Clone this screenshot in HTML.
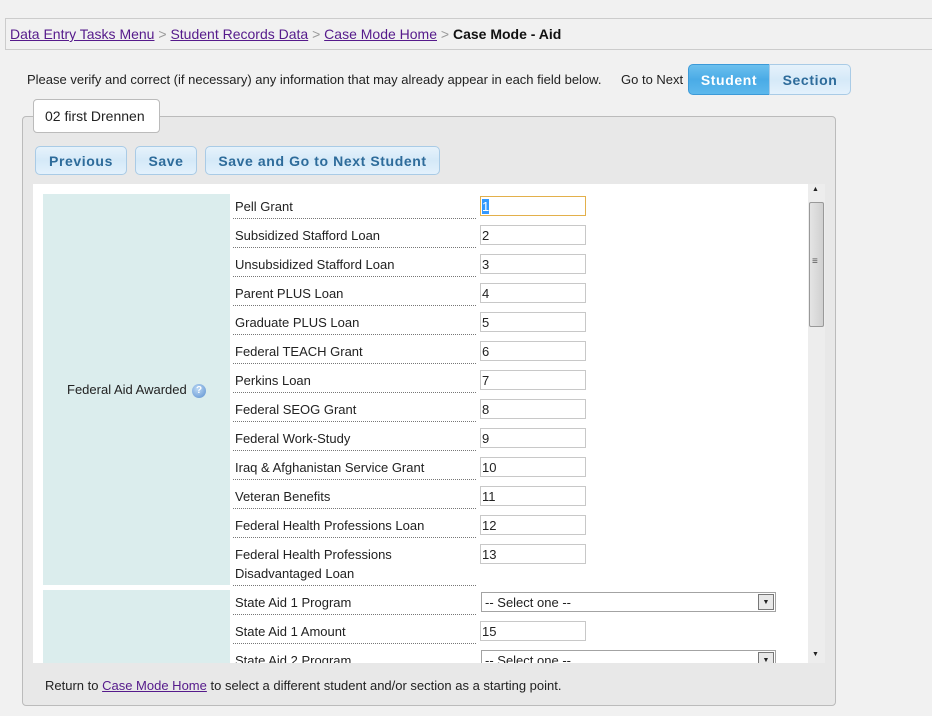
<!DOCTYPE html>
<html><head><style>
*{box-sizing:border-box}
body{margin:0;width:932px;height:716px;background:#f1f1f1;font-family:"Liberation Sans",Arial,sans-serif;font-size:13px;color:#222;position:relative;overflow:hidden}
.a{position:absolute;white-space:nowrap}
a{color:#551a8b;text-decoration:underline}
.bc{left:5px;top:18px;width:940px;height:32px;border:1px solid #ccc;font-size:14px;padding:7px 0 0 4px;color:#999}
.bc b{color:#111}
.btn{border:1px solid #a9cbe6;border-radius:5px;background:linear-gradient(#e6f2fb,#d5e9f8 50%,#e3f1fc);color:#2d6b9a;font-weight:bold;font-size:14px;text-align:center;font-family:"Liberation Sans",sans-serif;letter-spacing:0.6px}
.lbl{left:235px;font-size:13px;color:#222}
.dot{left:233px;width:243px;border-top:1px dotted #777;height:0}
.inp{left:480px;width:106px;height:20px;border:1px solid #c8c8c8;background:#fff;font-size:13px;padding:2px 0 0 1px}
.sel{left:481px;width:295px;height:20px;border:1px solid #a3a3a3;background:#fff;font-size:13px;padding:2px 0 0 3px}
.sel i{position:absolute;right:1px;top:1px;width:16px;height:16px;border:1px solid #777;background:#e8e8e8;font-style:normal;font-size:7px;text-align:center;line-height:16px}
</style></head><body>
<div class="a bc"><a>Data Entry Tasks Menu</a> &gt; <a>Student Records Data</a> &gt; <a>Case Mode Home</a> &gt; <b>Case Mode - Aid</b></div>
<div class="a" style="left:27px;top:72px">Please verify and correct (if necessary) any information that may already appear in each field below.</div>
<div class="a" style="left:621px;top:72px">Go to Next</div>
<div class="a btn" style="left:688px;top:64px;width:82px;height:31px;line-height:30px;border-color:#3c9ad8;border-radius:5px 0 0 5px;background:linear-gradient(#6cc0ee,#4aabe6 50%,#5db8ec);color:#fff">Student</div>
<div class="a btn" style="left:769px;top:64px;width:82px;height:31px;line-height:30px;border-radius:0 5px 5px 0">Section</div>
<div class="a" style="left:22px;top:116px;width:814px;height:590px;background:#e8e8e8;border:1px solid #bbb;border-radius:4px"></div>
<div class="a" style="left:33px;top:99px;width:127px;height:34px;background:#fff;border:1px solid #bbb;border-radius:4px;font-size:14px;padding:8px 0 0 11px">02 first Drennen</div>
<div class="a btn" style="left:35px;top:146px;width:92px;height:29px;line-height:28px">Previous</div>
<div class="a btn" style="left:135px;top:146px;width:62px;height:29px;line-height:28px">Save</div>
<div class="a btn" style="left:205px;top:146px;width:235px;height:29px;line-height:28px">Save and Go to Next Student</div>
<div class="a" style="left:33px;top:184px;width:792px;height:479px;background:#fff"></div>
<div class="a" style="left:808px;top:184px;width:17px;height:479px;background:#ededed"></div>
<div class="a" style="left:812px;top:186px;font-size:7px">▲</div>
<div class="a" style="left:812px;top:651px;font-size:7px">▼</div>
<div class="a" style="left:809px;top:202px;width:15px;height:125px;border:1px solid #999;border-radius:2px;background:linear-gradient(90deg,#e4e4e4,#d0d0d0)"></div>
<div class="a" style="left:812px;top:256px;font-size:10px;color:#555">≡</div>
<div class="a" style="left:43px;top:194px;width:187px;height:391px;background:#dbeded"></div>
<div class="a" style="left:43px;top:590px;width:187px;height:73px;background:#dbeded"></div>
<div class="a" style="left:67px;top:382px">Federal Aid Awarded</div>
<div class="a" style="left:192px;top:384px;width:14px;height:14px;border-radius:50%;background:radial-gradient(circle at 40% 35%,#bcd9f5,#5b8fcf);color:#fff;font-size:10px;font-weight:bold;text-align:center;line-height:14px">?</div>
<div class="a lbl" style="top:199px">Pell Grant</div>
<div class="a lbl" style="top:228px">Subsidized Stafford Loan</div>
<div class="a lbl" style="top:257px">Unsubsidized Stafford Loan</div>
<div class="a lbl" style="top:286px">Parent PLUS Loan</div>
<div class="a lbl" style="top:315px">Graduate PLUS Loan</div>
<div class="a lbl" style="top:344px">Federal TEACH Grant</div>
<div class="a lbl" style="top:373px">Perkins Loan</div>
<div class="a lbl" style="top:402px">Federal SEOG Grant</div>
<div class="a lbl" style="top:431px">Federal Work-Study</div>
<div class="a lbl" style="top:460px">Iraq &amp; Afghanistan Service Grant</div>
<div class="a lbl" style="top:489px">Veteran Benefits</div>
<div class="a lbl" style="top:518px">Federal Health Professions Loan</div>
<div class="a lbl" style="top:547px">Federal Health Professions</div>
<div class="a lbl" style="top:566px">Disadvantaged Loan</div>
<div class="a lbl" style="top:595px">State Aid 1 Program</div>
<div class="a lbl" style="top:624px">State Aid 1 Amount</div>
<div class="a lbl" style="top:653px">State Aid 2 Program</div>
<div class="a dot" style="top:218px"></div><div class="a dot" style="top:247px"></div><div class="a dot" style="top:276px"></div><div class="a dot" style="top:305px"></div><div class="a dot" style="top:334px"></div><div class="a dot" style="top:363px"></div><div class="a dot" style="top:392px"></div><div class="a dot" style="top:421px"></div><div class="a dot" style="top:450px"></div><div class="a dot" style="top:479px"></div><div class="a dot" style="top:508px"></div><div class="a dot" style="top:537px"></div><div class="a dot" style="top:585px"></div><div class="a dot" style="top:614px"></div><div class="a dot" style="top:643px"></div>
<div class="a inp" style="top:196px;border:1px solid #e3b04b"><span style="background:#3399ff;color:#fff">1</span></div>
<div class="a inp" style="top:225px">2</div>
<div class="a inp" style="top:254px">3</div>
<div class="a inp" style="top:283px">4</div>
<div class="a inp" style="top:312px">5</div>
<div class="a inp" style="top:341px">6</div>
<div class="a inp" style="top:370px">7</div>
<div class="a inp" style="top:399px">8</div>
<div class="a inp" style="top:428px">9</div>
<div class="a inp" style="top:457px">10</div>
<div class="a inp" style="top:486px">11</div>
<div class="a inp" style="top:515px">12</div>
<div class="a inp" style="top:544px">13</div>
<div class="a sel" style="top:592px">-- Select one --<i>▼</i></div>
<div class="a inp" style="top:621px">15</div>
<div class="a" style="left:33px;top:663px;width:792px;height:30px;background:#e8e8e8"></div>
<div class="a sel" style="top:650px;height:13px;overflow:hidden;border-bottom:none">-- Select one --<i>▼</i></div>
<div class="a" style="left:45px;top:678px">Return to <a>Case Mode Home</a> to select a different student and/or section as a starting point.</div>
</body></html>
